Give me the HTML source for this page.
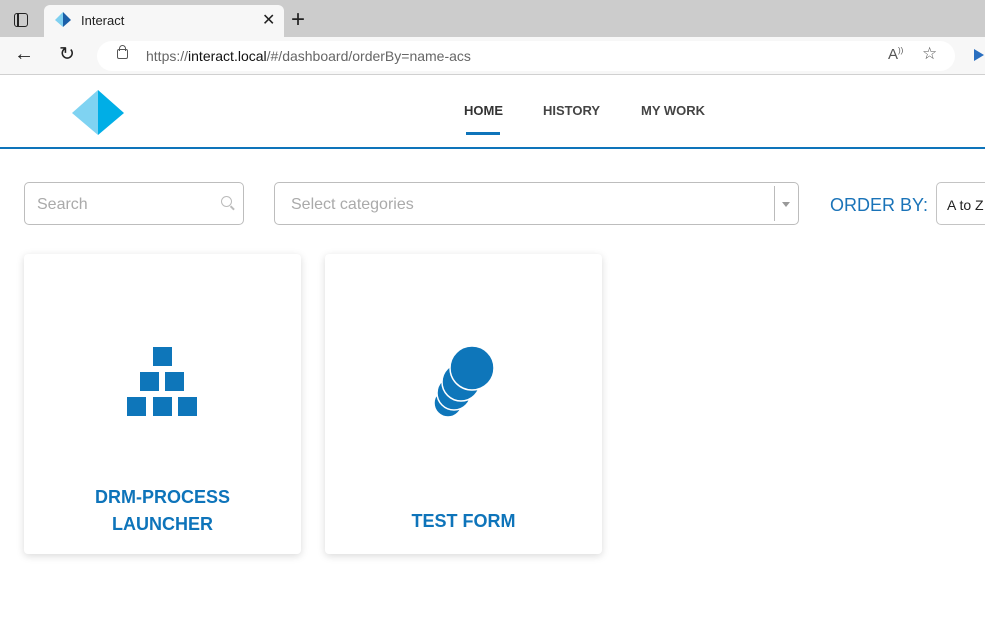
<!DOCTYPE html>
<html><head><style>
*{margin:0;padding:0;box-sizing:border-box}
body{width:985px;height:626px;overflow:hidden;background:#fff;font-family:"Liberation Sans",sans-serif;position:relative}
.a{position:absolute}
</style></head><body>
<div class="a" style="left:0;top:0;width:985px;height:37px;background:#cccccc"></div>
<div class="a" style="left:14px;top:13px;width:14px;height:14px;border:1.5px solid #222;border-radius:3px"></div>
<div class="a" style="left:17px;top:14px;width:1.5px;height:12px;background:#222"></div>
<div class="a" style="left:44px;top:5px;width:240px;height:33px;background:#f7f7f7;border-radius:6px 6px 0 0"></div>
<svg class="a" style="left:55px;top:12px" width="16" height="16"><polygon points="8,0 0,8 8,15" fill="#7fd0f0"/><polygon points="8,0 16,8 8,15" fill="#1b5fa8"/></svg>
<div class="a" style="left:81px;top:13px;font-size:13px;color:#222">Interact</div>
<div class="a" style="left:262px;top:10px;font-size:16px;color:#222">✕</div>
<div class="a" style="left:291px;top:6px;font-size:24px;color:#222;font-weight:300">+</div>
<div class="a" style="left:0;top:37px;width:985px;height:38px;background:#f7f7f7;border-bottom:1px solid #d0d0d0"></div>
<div class="a" style="left:14px;top:43px;font-size:20px;color:#222">←</div>
<div class="a" style="left:59px;top:43px;font-size:19px;color:#222">↻</div>
<div class="a" style="left:97px;top:41px;width:858px;height:30px;background:#fff;border-radius:15px"></div>
<div class="a" style="left:117px;top:49px;width:11px;height:10px;border:1.5px solid #555;border-radius:2px"></div>
<div class="a" style="left:119px;top:45px;width:7px;height:6px;border:1.5px solid #555;border-bottom:none;border-radius:4px 4px 0 0"></div>
<div class="a" style="left:146px;top:48px;font-size:14px;color:#666">https://<span style="color:#111">interact.local</span>/#/dashboard/orderBy=name-acs</div>
<div class="a" style="left:888px;top:46px;font-size:15px;color:#555">A<sup style="font-size:8px">))</sup></div>
<div class="a" style="left:922px;top:44px;font-size:17px;color:#555">☆</div>
<div class="a" style="left:974px;top:49px;width:0;height:0;border-left:10px solid #2a6fc0;border-top:6px solid transparent;border-bottom:6px solid transparent"></div>
<svg class="a" style="left:72px;top:90px" width="52" height="45"><polygon points="26,0 0,23 26,45" fill="#7fd3f2"/><polygon points="26,0 52,23 26,45" fill="#00aee6"/></svg>
<div class="a" style="left:464px;top:103px;font-size:13px;font-weight:bold;color:#333">HOME</div>
<div class="a" style="left:466px;top:132px;width:34px;height:3px;background:#0e74ba"></div>
<div class="a" style="left:543px;top:103px;font-size:13px;font-weight:bold;color:#444">HISTORY</div>
<div class="a" style="left:641px;top:103px;font-size:13px;font-weight:bold;color:#444">MY WORK</div>
<div class="a" style="left:0;top:147px;width:985px;height:2px;background:#0e74ba"></div>
<div class="a" style="left:24px;top:182px;width:220px;height:43px;border:1px solid #bdbdbd;border-radius:5px"></div>
<div class="a" style="left:37px;top:196px;font-size:16px;color:#aaa">Search</div>
<div class="a" style="left:221px;top:196px;width:11px;height:11px;border:1.5px solid #bbb;border-radius:50%"></div>
<div class="a" style="left:230px;top:207px;width:5px;height:1.5px;background:#bbb;transform:rotate(45deg)"></div>
<div class="a" style="left:274px;top:182px;width:525px;height:43px;border:1px solid #bdbdbd;border-radius:5px"></div>
<div class="a" style="left:291px;top:196px;font-size:16px;color:#aaa">Select categories</div>
<div class="a" style="left:774px;top:186px;width:1px;height:35px;background:#bbb"></div>
<div class="a" style="left:782px;top:202px;border-top:5px solid #999;border-left:4px solid transparent;border-right:4px solid transparent"></div>
<div class="a" style="left:830px;top:195px;font-size:18px;color:#1a73b8">ORDER BY:</div>
<div class="a" style="left:936px;top:182px;width:60px;height:43px;border:1px solid #c4c4c4;border-radius:5px"></div>
<div class="a" style="left:947px;top:197px;font-size:14px;color:#222">A to Z</div>
<div class="a" style="left:24px;top:254px;width:277px;height:300px;background:#fff;border-radius:4px;box-shadow:0 2px 8px rgba(0,0,0,.15)"></div>
<div class="a" style="left:325px;top:254px;width:277px;height:300px;background:#fff;border-radius:4px;box-shadow:0 2px 8px rgba(0,0,0,.15)"></div>
<svg class="a" style="left:0;top:0" width="985" height="626">
<g fill="#0e76ba"><rect x="153" y="347" width="19" height="19"/><rect x="140" y="372" width="19" height="19"/><rect x="165" y="372" width="19" height="19"/><rect x="127" y="397" width="19" height="19"/><rect x="153" y="397" width="19" height="19"/><rect x="178" y="397" width="19" height="19"/>
<g stroke="#fff" stroke-width="1.5"><circle cx="448" cy="403" r="14"/><circle cx="454" cy="393" r="17"/><circle cx="461" cy="382" r="19"/><circle cx="472" cy="368" r="22"/></g></g>
</svg>
<div class="a" style="left:24px;top:484px;width:277px;text-align:center;font-size:18px;font-weight:bold;color:#0e74ba;line-height:27px">DRM-PROCESS<br>LAUNCHER</div>
<div class="a" style="left:325px;top:511px;width:277px;text-align:center;font-size:18px;font-weight:bold;color:#0e74ba">TEST FORM</div>
</body></html>
